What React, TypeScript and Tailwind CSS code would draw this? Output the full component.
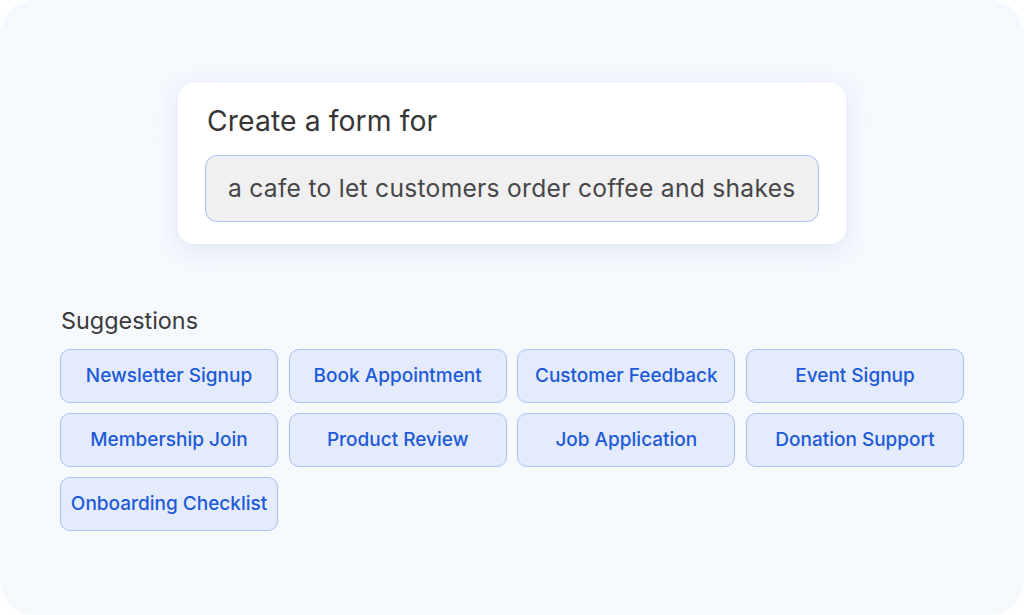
import React from "react";

const items = [
  "Newsletter Signup",
  "Book Appointment",
  "Customer Feedback",
  "Event Signup",
  "Membership Join",
  "Product Review",
  "Job Application",
  "Donation Support",
  "Onboarding Checklist",
];

export default function App() {
  return (
    <div className="w-[1024px] h-[615px] bg-white font-['Inter',sans-serif]">
      <div className="w-[1024px] h-[615px] rounded-[34px] bg-[#f6f9fe] bg-[linear-gradient(to_bottom,rgba(246,249,254,0)_0px,#f6f9fe_170px),radial-gradient(circle,#eef3fb_2.2px,transparent_2.6px)] bg-[length:100%_100%,16px_16px] bg-[position:0_0,0px_0px] flex flex-col pt-[83px] pl-[60px]">
        <div className="ml-[118px] w-[668px] h-[161px] rounded-[16px] bg-white shadow-[0_6px_24px_rgba(120,140,190,0.18)] flex flex-col pl-[27px] pr-[27px] pt-[21px]">
          <div className="pl-[2px] text-[28.3px] leading-[34px] text-[#363636] tracking-[0.1px]">Create a form for</div>
          <div className="mt-[17px] h-[67px] rounded-[12px] bg-[#f0f0f1] border border-[#a6bff0] flex items-center pl-[22px] text-[24.6px] text-[#474747] tracking-[0.28px]">
            a cafe to let customers order coffee and shakes
          </div>
        </div>
        <div className="mt-[62px] text-[23.4px] leading-[30px] text-[#3a3a3a] pl-[1px]">Suggestions</div>
        <div className="mt-[13px] w-[904px] grid grid-cols-4 gap-x-[10.67px] gap-y-[10px]">
          {items.map((t) => (
            <div
              key={t}
              className="h-[54px] rounded-[10px] bg-[#e3ebfd] border border-[#a9c1f1] flex items-center justify-center text-[19px] font-medium text-[#1d5ad8]"
            >
              {t}
            </div>
          ))}
        </div>
      </div>
    </div>
  );
}
